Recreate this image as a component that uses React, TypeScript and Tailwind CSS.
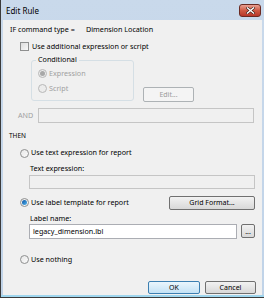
import React from "react";

const font = { fontFamily: '"Noto Sans", "Open Sans", sans-serif' };

function Radio({ checked, disabled }: { checked?: boolean; disabled?: boolean }) {
  return (
    <span
      className={`inline-flex w-[9px] h-[9px] rounded-full border items-center justify-center shrink-0 ${
        disabled ? "border-[#b8b8b8] bg-[#ececec]" : "border-[#8e8f8f] bg-gradient-to-br from-[#e8e8e8] to-[#fafafa]"
      }`}
    >
      {checked && (
        <span
          className={`w-[5px] h-[5px] rounded-full ${
            disabled ? "bg-[#a8a8a8]" : "bg-gradient-to-br from-[#0c4fa0] to-[#52b8f0]"
          }`}
        />
      )}
    </span>
  );
}

function Btn({ children, className = "", def = false, disabled = false }: { children: React.ReactNode; className?: string; def?: boolean; disabled?: boolean }) {
  return (
    <div
      className={`flex items-center justify-center rounded-[2px] border text-[7px] ${
        def
          ? "border-[#3c7fb1] bg-gradient-to-b from-[#eaf6fd] to-[#c4e2f5] text-black"
          : disabled
          ? "border-[#adb2b5] bg-[#f4f4f4] text-[#9a9a9a]"
          : "border-[#707070] bg-gradient-to-b from-[#f2f2f2] to-[#d8d8d8] text-black"
      } ${className}`}
    >
      {children}
    </div>
  );
}

export default function App() {
  return (
    <div className="w-[264px] h-[298px] overflow-hidden bg-[#3b3b3b] text-[7.2px] leading-none text-black" style={font}>
      <div className="w-full h-[297px] bg-gradient-to-b from-[#c9d9eb] to-[#c0d3e8] flex flex-col border-l border-[#3b3b3b]">
        {/* Title bar */}
        <div className="h-[20px] shrink-0 flex items-start justify-between pl-[5px] pr-[3px] pt-[3px]">
          <span className="text-[8px] mt-[4px] text-black">Edit Rule</span>
          <div className="w-[22px] h-[13px] mt-[1px] rounded-[3px] border border-[#6b2a22] bg-gradient-to-b from-[#e8a093] via-[#cf5a44] to-[#b8382a] flex items-center justify-center">
            <svg width="9" height="7" viewBox="0 0 9 7">
              <path d="M1.5 1 L7.5 6 M7.5 1 L1.5 6" stroke="#3a1a14" strokeWidth="2.6" strokeLinecap="square" />
              <path d="M1.5 1 L7.5 6 M7.5 1 L1.5 6" stroke="white" strokeWidth="1.5" strokeLinecap="square" />
            </svg>
          </div>
        </div>
        {/* Body */}
        <div className="flex-1 bg-[#f0f0f0] ml-[2px] mr-[2px] flex flex-col relative">
          <div className="flex items-center h-[12px] mt-[4px] pl-[7px]">
            <span className="w-[76px]">IF command type =</span>
            <span>Dimension Location</span>
          </div>
          <div className="flex items-center gap-[2px] pl-[17px] mt-[5px] h-[11px]">
            <span className="w-[9px] h-[9px] border border-[#8e8f8f] bg-gradient-to-br from-[#dcdcdc] to-[#f8f8f8] shrink-0" />
            <span className="ml-[1px]">Use additional expression or script</span>
          </div>
          <div className="flex items-end pl-[28px] mt-[4px]">
            <div className="relative w-[103px] h-[41px] border border-[#d5dfe5] rounded-[3px] mt-[4px]">
              <span className="absolute -top-[5px] left-[4px] px-[2px] bg-[#f0f0f0] text-black">Conditional</span>
              <div className="flex items-center gap-[2px] pl-[6px] mt-[8px] text-[#a0a0a0]">
                <Radio checked disabled />
                <span>Expression</span>
              </div>
              <div className="flex items-center gap-[2px] pl-[6px] mt-[6px] text-[#a0a0a0]">
                <Radio disabled />
                <span>Script</span>
              </div>
            </div>
            <Btn disabled className="w-[51px] h-[15px] ml-[9px] mb-[-1px]">Edit...</Btn>
          </div>
          <div className="flex items-center pl-[15px] mt-[7px]">
            <span className="w-[20px] text-[#a0a0a0]">AND</span>
            <div className="w-[216px] h-[15px] border border-[#c5c5c5] bg-[#f0f0f0]" />
          </div>
          <div className="pl-[6px] mt-[10px] text-[6.5px]">THEN</div>
          <div className="flex items-center gap-[2px] pl-[17px] mt-[9px]">
            <Radio />
            <span>Use text expression for report</span>
          </div>
          <div className="pl-[27px] mt-[7px]">Text expression:</div>
          <div className="ml-[26px] mt-[3px] w-[226px] h-[14px] border border-[#c5c5c5] bg-[#f0f0f0]" />
          <div className="flex items-center pl-[17px] mt-[7px] pr-[7px]">
            <div className="flex items-center gap-[2px] flex-1">
              <Radio checked />
              <span>Use label template for report</span>
            </div>
            <Btn className="w-[86px] h-[14px]">Grid Format...</Btn>
          </div>
          <div className="pl-[27px] mt-[5px]">Label name:</div>
          <div className="flex items-center ml-[26px] mt-[2px]">
            <div className="w-[208px] h-[15px] border border-[#abadb3] bg-white flex items-center pl-[3px]">legacy_dimension.lbl</div>
            <Btn className="w-[14px] h-[14px] ml-[4px] text-[#5a5a8a]">...</Btn>
          </div>
          <div className="flex items-center gap-[2px] pl-[17px] mt-[16px]">
            <Radio />
            <span>Use nothing</span>
          </div>
          <div className="flex justify-end gap-[5px] pr-[6px] mt-auto mb-[1px]">
            <Btn def className="w-[52px] h-[13px]">OK</Btn>
            <Btn className="w-[51px] h-[13px]">Cancel</Btn>
          </div>
          <div className="h-[2px] bg-[#9fd6ee] -mx-[2px]" />
        </div>
      </div>
    </div>
  );
}
